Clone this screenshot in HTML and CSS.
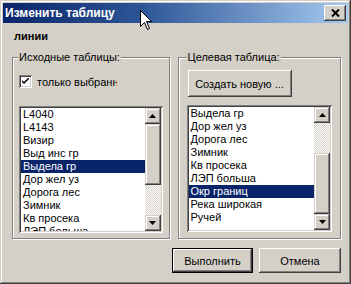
FILE: index.html
```html
<!DOCTYPE html>
<html lang="ru">
<head>
    <meta charset="UTF-8">
    <title>Изменить таблицу</title>
    <link rel="stylesheet" href="styles.css">
</head>
<body>
    <div class="window">
        <div class="titlebar">
            <span class="title">Изменить таблицу</span>
            <button class="close-btn">
                <svg width="9" height="8" viewBox="0 0 9 8"><path d="M1 0.5 L8 7.5 M8 0.5 L1 7.5" stroke="#000" stroke-width="2"/></svg>
            </button>
        </div>
        <div class="content">
            <div class="layer-name">линии</div>
            <div class="groups">
                <div class="group group-src">
                    <span class="legend">Исходные таблицы:</span>
                    <div class="check-row">
                        <span class="checkbox">
                            <svg width="7" height="7" viewBox="0 0 7 7"><path d="M0 2 L0 4 L2 6 L7 1 L7 -1 L2 4 Z" fill="#000"/></svg>
                        </span>
                        <span class="check-label">только выбранные</span>
                    </div>
                    <div class="listbox">
                        <ul class="items">
                            <li>L4040</li>
                            <li>L4143</li>
                            <li>Визир</li>
                            <li>Выд инс гр</li>
                            <li class="selected">Выдела гр</li>
                            <li>Дор жел уз</li>
                            <li>Дорога лес</li>
                            <li>Зимник</li>
                            <li>Кв просека</li>
                            <li>ЛЭП больша</li>
                        </ul>
                        <div class="scrollbar">
                            <div class="sb-btn"><svg width="7" height="4" viewBox="0 0 7 4"><path d="M3.5 0 L7 4 L0 4 Z" fill="#000"/></svg></div>
                            <div class="sb-thumb"></div>
                            <div class="sb-track"></div>
                            <div class="sb-btn"><svg width="7" height="4" viewBox="0 0 7 4"><path d="M0 0 L7 0 L3.5 4 Z" fill="#000"/></svg></div>
                        </div>
                    </div>
                </div>
                <div class="group group-dst">
                    <span class="legend">Целевая таблица:</span>
                    <button class="btn btn-create">Создать новую ...</button>
                    <div class="listbox">
                        <ul class="items">
                            <li>Выдела гр</li>
                            <li>Дор жел уз</li>
                            <li>Дорога лес</li>
                            <li>Зимник</li>
                            <li>Кв просека</li>
                            <li>ЛЭП больша</li>
                            <li class="selected">Окр границ</li>
                            <li>Река широкая</li>
                            <li>Ручей</li>
                        </ul>
                        <div class="scrollbar">
                            <div class="sb-btn"><svg width="7" height="4" viewBox="0 0 7 4"><path d="M3.5 0 L7 4 L0 4 Z" fill="#000"/></svg></div>
                            <div class="sb-track"></div>
                            <div class="sb-thumb"></div>
                            <div class="sb-btn"><svg width="7" height="4" viewBox="0 0 7 4"><path d="M0 0 L7 0 L3.5 4 Z" fill="#000"/></svg></div>
                        </div>
                    </div>
                </div>
            </div>
            <div class="actions">
                <button class="btn btn-default btn-ok">Выполнить</button>
                <button class="btn btn-cancel">Отмена</button>
            </div>
        </div>
        <!-- mouse pointer over the caption -->
        <svg class="cursor" width="13" height="21" viewBox="0 0 13 21">
            <path d="M0.5 0.5 L0.5 16.5 L4.5 12.5 L7.5 19.5 L9.5 18.5 L6.5 11.5 L11.5 11.5 Z" fill="#fff" stroke="#000" stroke-width="1"/>
        </svg>
    </div>
</body>
</html>
```

FILE: styles.css
```css
body {
    margin: 0;
    font-family: "Liberation Sans", Arial, sans-serif;
    font-size: 11px;
    color: #000;
}
.window {
    position: relative;
    width: 351px;
    height: 284px;
    box-sizing: border-box;
    padding: 3px;
    background-color: #d4d0c8;
    box-shadow: inset -1px -1px #404040, inset 1px 1px #d4d0c8, inset -2px -2px #808080, inset 2px 2px #fff;
    overflow: hidden;
}
.titlebar {
    height: 20px;
    display: flex;
    align-items: center;
    justify-content: space-between;
    padding: 0 2px 0 2px;
    background: linear-gradient(to right, #0a246a 0%, #2d5596 40%, #a6caf0 100%);
}
.title {
    color: #fff;
    font-weight: bold;
    font-size: 12px;
}
.close-btn {
    width: 22px;
    height: 16px;
    padding: 0;
    border: none;
    display: flex;
    align-items: center;
    justify-content: center;
    background-color: #d4d0c8;
    box-shadow: inset -1px -1px #404040, inset 1px 1px #fff, inset -2px -2px #808080, inset 2px 2px #d4d0c8;
}
.content {
    padding: 6px 7px 0 9px;
}
.layer-name {
    font-weight: bold;
    line-height: 14px;
    padding-left: 2px;
}
.groups {
    display: flex;
    gap: 8px;
    margin-top: 14px;
}
.group {
    position: relative;
    height: 182px;
    box-sizing: border-box;
    border: 1px solid #808080;
    box-shadow: inset 1px 1px #fff, 1px 1px #fff;
    display: flex;
    flex-direction: column;
}
.group-src {
    width: 158px;
    padding: 17px 6px 0 6px;
}
.group-dst {
    width: 164px;
    padding: 12px 8px 0 8px;
}
.legend {
    position: absolute;
    top: -7px;
    left: 5px;
    padding: 0 1px;
    line-height: 13px;
    background-color: #d4d0c8;
}
.group-dst .legend {
    left: 8px;
}
.check-row {
    display: flex;
    align-items: center;
    gap: 5px;
    width: 98px;
    height: 13px;
    overflow: hidden;
    white-space: nowrap;
}
.checkbox {
    flex: none;
    width: 13px;
    height: 13px;
    box-sizing: border-box;
    display: flex;
    align-items: center;
    justify-content: center;
    background-color: #fff;
    box-shadow: inset 1px 1px #808080, inset -1px -1px #fff, inset 2px 2px #404040, inset -2px -2px #d4d0c8;
}
.listbox {
    height: 127px;
    box-sizing: border-box;
    padding: 2px;
    display: flex;
    background-color: #fff;
    box-shadow: inset 1px 1px #808080, inset -1px -1px #fff, inset 2px 2px #404040, inset -2px -2px #d4d0c8;
}
.group-src .listbox {
    margin-top: 18px;
}
.group-dst .listbox {
    margin-top: 8px;
}
.items {
    flex: 1;
    margin: 0;
    padding: 0;
    list-style: none;
    overflow: hidden;
}
.items li {
    height: 13px;
    line-height: 13px;
    padding-left: 2px;
    white-space: nowrap;
}
.items li.selected {
    background-color: #0a246a;
    color: #fff;
}
.scrollbar {
    width: 16px;
    display: flex;
    flex-direction: column;
}
.sb-btn, .sb-thumb {
    flex: none;
    background-color: #d4d0c8;
    box-shadow: inset -1px -1px #404040, inset 1px 1px #d4d0c8, inset -2px -2px #808080, inset 2px 2px #fff;
}
.sb-btn {
    height: 16px;
    display: flex;
    align-items: center;
    justify-content: center;
}
.sb-thumb {
    height: 61px;
}
.sb-track {
    flex: 1;
    background: repeating-conic-gradient(#fff 0 25%, #d4d0c8 0 50%) 0 0 / 2px 2px;
}
.btn {
    font-family: "Liberation Sans", Arial, sans-serif;
    font-size: 11px;
    color: #000;
    border: none;
    padding: 0;
    background-color: #d4d0c8;
    box-shadow: inset -1px -1px #404040, inset 1px 1px #fff, inset -2px -2px #808080, inset 2px 2px #d4d0c8;
}
.btn-create {
    align-self: flex-start;
    width: 104px;
    height: 27px;
    margin-left: 1px;
}
.actions {
    display: flex;
    justify-content: flex-end;
    gap: 6px;
    margin-top: 9px;
}
.btn-ok {
    width: 81px;
    height: 25px;
}
.btn-default {
    border: 1px solid #000;
}
.btn-cancel {
    width: 82px;
    height: 25px;
}
.cursor {
    position: absolute;
    left: 140px;
    top: 10px;
}
```
